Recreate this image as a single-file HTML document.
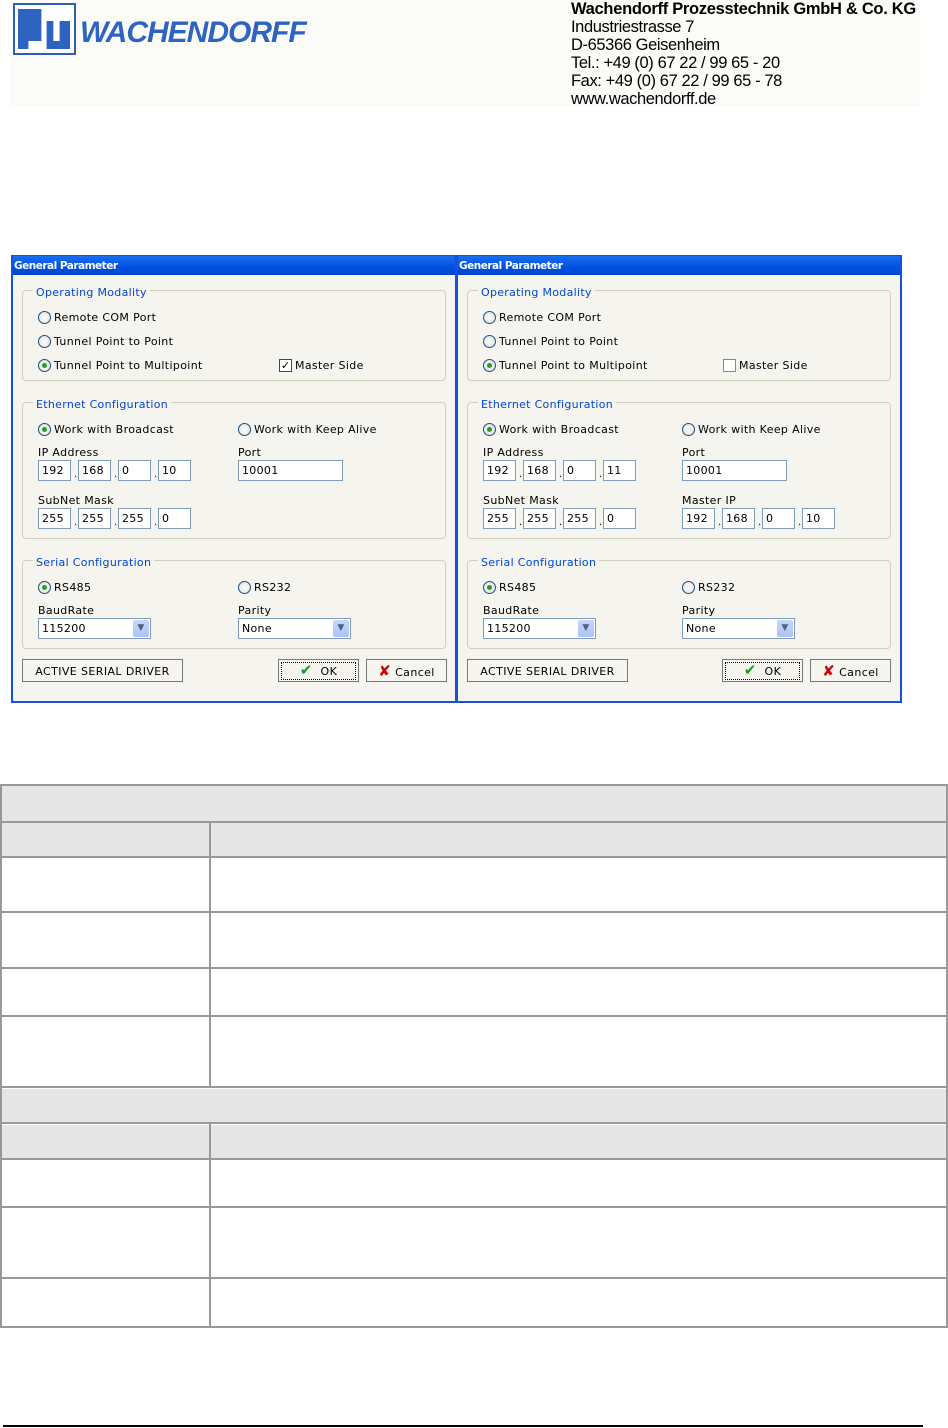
<!DOCTYPE html>
<html><head><meta charset="utf-8"><style>
*{margin:0;padding:0;box-sizing:border-box}
body{width:948px;height:1428px;background:#fff;position:relative;overflow:hidden;font-family:"DejaVu Sans","Liberation Sans",sans-serif}
.a{position:absolute}
.dlg{position:absolute;top:255px;width:446px;height:448px;background:#f5f4ee;border:2px solid #1650e0;border-top:1px solid #1650e0}
.tt{position:absolute;left:0;top:0;width:100%;height:19px;background:linear-gradient(#1a6ef0,#0050e0 60%,#0046d0);color:#fff;font:bold 10.5px "DejaVu Sans",sans-serif;line-height:21px;padding-left:1px;letter-spacing:-0.5px}
.g{position:absolute;border:1px solid #d0d0bf;border-radius:4px;left:9px;width:424px}
.lg{position:absolute;font-size:11px;letter-spacing:0.3px;color:#0046d5;background:#f5f4ee;padding:0 3px;line-height:13px}
.t{position:absolute;font-size:11px;letter-spacing:0.35px;color:#000;line-height:15px;white-space:nowrap}
.r{position:absolute;width:13px;height:13px;border-radius:50%;border:1px solid #1c5180;background:radial-gradient(#fff,#dcdcd6)}
.r.on::after{content:"";position:absolute;left:3px;top:3px;width:5px;height:5px;border-radius:50%;background:#21a121}
.in{position:absolute;height:21px;border:1px solid #7f9db9;background:#fff;font-size:11px;letter-spacing:0.3px;line-height:20px;padding-left:3px}
.dot{position:absolute;font-size:10px;line-height:10px}
.cb{position:absolute;width:13px;height:13px;border:1px solid #1c5180;background:#fff}
.dd{position:absolute;right:1px;top:1px;width:16px;height:17px;background:linear-gradient(#c6d6fb,#aec3f5);border-radius:2px;color:#4d6185;font-size:9px;text-align:center;line-height:17px}
.bt{position:absolute;height:23px;border:1px solid #777;background:#f5f4ee;font-size:11px;letter-spacing:0.4px;line-height:23px;text-align:center;color:#000}
</style></head><body>
<!-- header -->
<div class="a" style="left:10px;top:0;width:910px;height:106px;background:#fbfbf7"></div>
<div class="a" style="left:13px;top:3px;width:63px;height:52px;border:2px solid #2e5fb0;background:#fff"></div>
<div class="a" style="left:18px;top:9px;width:52px;height:40px;background:#2e64c0;clip-path:polygon(0 0,45% 0,45% 30%,55% 30%,55% 100%,100% 100%,100% 30%,80% 30%,80% 80%,68% 80%,68% 30%,45% 30%,45% 80%,20% 80%,20% 100%,0 100%)"></div>
<div class="a" style="left:80px;top:16px;font:italic bold 30px 'Liberation Sans',sans-serif;color:#2e64c0;letter-spacing:-1px">WACHENDORFF</div>
<div class="a" style="left:571px;top:0px;font:bold 16.5px/18px 'Liberation Sans',sans-serif;letter-spacing:-0.3px">Wachendorff Prozesstechnik GmbH &amp; Co. KG</div>
<div class="a" style="left:571px;top:18px;font:16.5px/18px 'Liberation Sans',sans-serif;letter-spacing:-0.4px">Industriestrasse 7<br>D-65366 Geisenheim<br>Tel.: +49 (0) 67 22 / 99 65 - 20<br>Fax: +49 (0) 67 22 / 99 65 - 78<br>www.wachendorff.de</div>

<!-- left dialog -->
<div class="dlg" style="left:11px">
<div class="tt">General Parameter</div>
<div class="g" style="top:34px;height:91px"></div><div class="lg" style="left:20px;top:30px">Operating Modality</div>
<div class="r" style="left:25px;top:55px"></div><div class="t" style="left:41px;top:54px">Remote COM Port</div>
<div class="r" style="left:25px;top:79px"></div><div class="t" style="left:41px;top:78px">Tunnel Point to Point</div>
<div class="r on" style="left:25px;top:103px"></div><div class="t" style="left:41px;top:102px">Tunnel Point to Multipoint</div>
<div class="cb" style="left:266px;top:103px;font-size:11px;line-height:11px;text-align:center;font-weight:bold">✓</div><div class="t" style="left:282px;top:102px">Master Side</div>
<div class="g" style="top:146px;height:137px"></div><div class="lg" style="left:20px;top:142px">Ethernet Configuration</div>
<div class="r on" style="left:25px;top:167px"></div><div class="t" style="left:41px;top:166px">Work with Broadcast</div>
<div class="r" style="left:225px;top:167px"></div><div class="t" style="left:241px;top:166px">Work with Keep Alive</div>
<div class="t" style="left:25px;top:189px">IP Address</div><div class="t" style="left:225px;top:189px">Port</div>
<div class="in" style="left:25px;top:204px;width:33px">192</div><div class="dot" style="left:61px;top:214px">.</div>
<div class="in" style="left:65px;top:204px;width:33px">168</div><div class="dot" style="left:101px;top:214px">.</div>
<div class="in" style="left:105px;top:204px;width:33px">0</div><div class="dot" style="left:141px;top:214px">.</div>
<div class="in" style="left:145px;top:204px;width:33px">10</div>
<div class="in" style="left:225px;top:204px;width:105px">10001</div>
<div class="t" style="left:25px;top:237px">SubNet Mask</div>
<div class="in" style="left:25px;top:252px;width:33px">255</div><div class="dot" style="left:61px;top:262px">.</div>
<div class="in" style="left:65px;top:252px;width:33px">255</div><div class="dot" style="left:101px;top:262px">.</div>
<div class="in" style="left:105px;top:252px;width:33px">255</div><div class="dot" style="left:141px;top:262px">.</div>
<div class="in" style="left:145px;top:252px;width:33px">0</div>
<div class="g" style="top:304px;height:89px"></div><div class="lg" style="left:20px;top:300px">Serial Configuration</div>
<div class="r on" style="left:25px;top:325px"></div><div class="t" style="left:41px;top:324px">RS485</div>
<div class="r" style="left:225px;top:325px"></div><div class="t" style="left:241px;top:324px">RS232</div>
<div class="t" style="left:25px;top:347px">BaudRate</div><div class="t" style="left:225px;top:347px">Parity</div>
<div class="in" style="left:25px;top:362px;width:113px">115200<div class="dd">▼</div></div>
<div class="in" style="left:225px;top:362px;width:113px">None<div class="dd">▼</div></div>
<div class="bt" style="left:9px;top:403px;width:161px">ACTIVE SERIAL DRIVER</div>
<div class="bt" style="left:265px;top:403px;width:81px"><span style="border:1px dotted #000;display:block;margin:2px;line-height:15px"><span style="color:#1a9a1a;font-weight:bold;font-size:15px">✔</span>&nbsp; OK</span></div>
<div class="bt" style="left:353px;top:403px;width:81px"><span style="color:#c00;font-weight:bold;font-size:15px">✘</span> Cancel</div>
</div>

<!-- right dialog -->
<div class="dlg" style="left:456px">
<div class="tt">General Parameter</div>
<div class="g" style="top:34px;height:91px"></div><div class="lg" style="left:20px;top:30px">Operating Modality</div>
<div class="r" style="left:25px;top:55px"></div><div class="t" style="left:41px;top:54px">Remote COM Port</div>
<div class="r" style="left:25px;top:79px"></div><div class="t" style="left:41px;top:78px">Tunnel Point to Point</div>
<div class="r on" style="left:25px;top:103px"></div><div class="t" style="left:41px;top:102px">Tunnel Point to Multipoint</div>
<div class="cb" style="left:265px;top:103px;border-color:#888"></div><div class="t" style="left:281px;top:102px">Master Side</div>
<div class="g" style="top:146px;height:137px"></div><div class="lg" style="left:20px;top:142px">Ethernet Configuration</div>
<div class="r on" style="left:25px;top:167px"></div><div class="t" style="left:41px;top:166px">Work with Broadcast</div>
<div class="r" style="left:224px;top:167px"></div><div class="t" style="left:240px;top:166px">Work with Keep Alive</div>
<div class="t" style="left:25px;top:189px">IP Address</div><div class="t" style="left:224px;top:189px">Port</div>
<div class="in" style="left:25px;top:204px;width:33px">192</div><div class="dot" style="left:61px;top:214px">.</div>
<div class="in" style="left:65px;top:204px;width:33px">168</div><div class="dot" style="left:101px;top:214px">.</div>
<div class="in" style="left:105px;top:204px;width:33px">0</div><div class="dot" style="left:141px;top:214px">.</div>
<div class="in" style="left:145px;top:204px;width:33px">11</div>
<div class="in" style="left:224px;top:204px;width:105px">10001</div>
<div class="t" style="left:25px;top:237px">SubNet Mask</div><div class="t" style="left:224px;top:237px">Master IP</div>
<div class="in" style="left:25px;top:252px;width:33px">255</div><div class="dot" style="left:61px;top:262px">.</div>
<div class="in" style="left:65px;top:252px;width:33px">255</div><div class="dot" style="left:101px;top:262px">.</div>
<div class="in" style="left:105px;top:252px;width:33px">255</div><div class="dot" style="left:141px;top:262px">.</div>
<div class="in" style="left:145px;top:252px;width:33px">0</div>
<div class="in" style="left:224px;top:252px;width:33px">192</div><div class="dot" style="left:260px;top:262px">.</div>
<div class="in" style="left:264px;top:252px;width:33px">168</div><div class="dot" style="left:300px;top:262px">.</div>
<div class="in" style="left:304px;top:252px;width:33px">0</div><div class="dot" style="left:340px;top:262px">.</div>
<div class="in" style="left:344px;top:252px;width:33px">10</div>
<div class="g" style="top:304px;height:89px"></div><div class="lg" style="left:20px;top:300px">Serial Configuration</div>
<div class="r on" style="left:25px;top:325px"></div><div class="t" style="left:41px;top:324px">RS485</div>
<div class="r" style="left:224px;top:325px"></div><div class="t" style="left:240px;top:324px">RS232</div>
<div class="t" style="left:25px;top:347px">BaudRate</div><div class="t" style="left:224px;top:347px">Parity</div>
<div class="in" style="left:25px;top:362px;width:113px">115200<div class="dd">▼</div></div>
<div class="in" style="left:224px;top:362px;width:113px">None<div class="dd">▼</div></div>
<div class="bt" style="left:9px;top:403px;width:161px">ACTIVE SERIAL DRIVER</div>
<div class="bt" style="left:264px;top:403px;width:81px"><span style="border:1px dotted #000;display:block;margin:2px;line-height:15px"><span style="color:#1a9a1a;font-weight:bold;font-size:15px">✔</span>&nbsp; OK</span></div>
<div class="bt" style="left:352px;top:403px;width:81px"><span style="color:#c00;font-weight:bold;font-size:15px">✘</span> Cancel</div>
</div>

<!-- table -->
<div class="a" style="left:0;top:784px;width:948px;height:544px;border:2px solid #999;background:#fff"></div>
<div class="a" style="left:2px;top:786px;width:944px;height:35px;background:#e6e6e6"></div>
<div class="a" style="left:2px;top:823px;width:944px;height:34px;background:#e6e6e6"></div>
<div class="a" style="left:2px;top:1089px;width:944px;height:34px;background:#e6e6e6"></div>
<div class="a" style="left:2px;top:1125px;width:944px;height:34px;background:#e6e6e6"></div>
<div class="a" style="left:0;top:821px;width:948px;height:2px;background:#999"></div>
<div class="a" style="left:0;top:856px;width:948px;height:2px;background:#999"></div>
<div class="a" style="left:0;top:911px;width:948px;height:2px;background:#999"></div>
<div class="a" style="left:0;top:967px;width:948px;height:2px;background:#999"></div>
<div class="a" style="left:0;top:1015px;width:948px;height:2px;background:#999"></div>
<div class="a" style="left:0;top:1086px;width:948px;height:2px;background:#999"></div>
<div class="a" style="left:0;top:1122px;width:948px;height:2px;background:#999"></div>
<div class="a" style="left:0;top:1158px;width:948px;height:2px;background:#999"></div>
<div class="a" style="left:0;top:1206px;width:948px;height:2px;background:#999"></div>
<div class="a" style="left:0;top:1277px;width:948px;height:2px;background:#999"></div>
<div class="a" style="left:209px;top:821px;width:2px;height:266px;background:#999"></div>
<div class="a" style="left:209px;top:1122px;width:2px;height:205px;background:#999"></div>
<!-- footer line -->
<div class="a" style="left:3px;top:1425px;width:920px;height:2px;background:#000"></div>
</body></html>
